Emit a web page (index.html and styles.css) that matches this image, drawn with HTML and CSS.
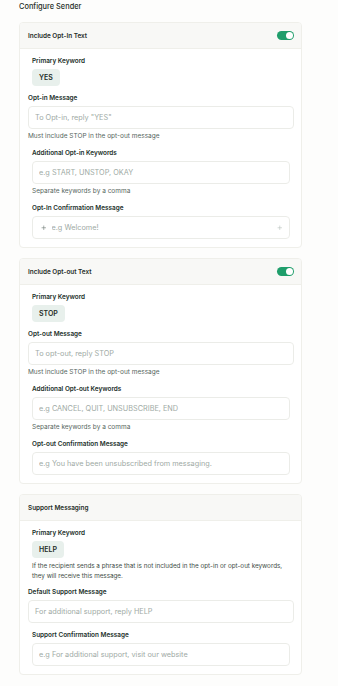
FILE: index.html
```html
<!DOCTYPE html>
<html lang="en">
<head>
    <meta charset="UTF-8">
    <meta name="viewport" content="width=device-width, initial-scale=1.0">
    <title>Configure Sender</title>
    <link rel="stylesheet" href="styles.css">
</head>
<body>
    <div class="page">
        <h1>Configure Sender</h1>

        <div class="card">
            <div class="card-head">
                <span>Include Opt-In Text</span>
                <span class="toggle"><span class="knob"></span></span>
            </div>
            <div class="card-body">
                <div class="group">
                    <div class="label">Primary Keyword</div>
                    <div class="chip">YES</div>
                </div>
                <div class="field">
                    <div class="label">Opt-in Message</div>
                    <input class="input" placeholder="To Opt-in, reply &quot;YES&quot;">
                    <div class="hint">Must include STOP in the opt-out message</div>
                </div>
                <div class="field group">
                    <div class="label">Additional Opt-in Keywords</div>
                    <input class="input" placeholder="e.g START, UNSTOP, OKAY">
                    <div class="hint">Separate keywords by a comma</div>
                </div>
                <div class="field group">
                    <div class="label">Opt-In Confirmation Message</div>
                    <div class="input input-icons">
                        <svg class="plus dark" viewBox="0 0 10 10"><path d="M5 1v8M1 5h8"/></svg>
                        <input placeholder="e.g Welcome!">
                        <svg class="plus" viewBox="0 0 10 10"><path d="M5 1v8M1 5h8"/></svg>
                    </div>
                </div>
            </div>
        </div>

        <div class="card">
            <div class="card-head">
                <span>Include Opt-out Text</span>
                <span class="toggle"><span class="knob"></span></span>
            </div>
            <div class="card-body">
                <div class="group">
                    <div class="label">Primary Keyword</div>
                    <div class="chip">STOP</div>
                </div>
                <div class="field">
                    <div class="label">Opt-out Message</div>
                    <input class="input" placeholder="To opt-out, reply STOP">
                    <div class="hint">Must include STOP in the opt-out message</div>
                </div>
                <div class="field group">
                    <div class="label">Additional Opt-out Keywords</div>
                    <input class="input" placeholder="e.g CANCEL, QUIT, UNSUBSCRIBE, END">
                    <div class="hint">Separate keywords by a comma</div>
                </div>
                <div class="field group">
                    <div class="label">Opt-out Confirmation Message</div>
                    <input class="input" placeholder="e.g You have been unsubscribed from messaging.">
                </div>
            </div>
        </div>

        <div class="card">
            <div class="card-head">
                <span>Support Messaging</span>
            </div>
            <div class="card-body">
                <div class="group">
                    <div class="label">Primary Keyword</div>
                    <div class="chip">HELP</div>
                    <p class="note">If the recipient sends a phrase that is not included in the opt-in or opt-out keywords, they will receive this message.</p>
                </div>
                <div class="field after-note">
                    <div class="label">Default Support Message</div>
                    <input class="input" placeholder="For additional support, reply HELP">
                </div>
                <div class="field group">
                    <div class="label">Support Confirmation Message</div>
                    <input class="input" placeholder="e.g For additional support, visit our website">
                </div>
            </div>
        </div>
    </div>
</body>
</html>
```

FILE: styles.css
```css
body {
    margin: 0;
    background: #fdfdfc;
    color: #1f2d27;
    font-family: Inter, 'Noto Sans', sans-serif;
}
.page {
    padding: 2px 36px 8px 19px;
}
h1 {
    font-size: 7.4px;
    font-weight: 500;
    line-height: 10px;
    margin: 0 0 10px;
}
.card {
    background: #fff;
    border: 1px solid #efefea;
    border-radius: 4px;
    margin-bottom: 10px;
    overflow: hidden;
}
.card-head {
    display: flex;
    justify-content: space-between;
    align-items: center;
    height: 25px;
    padding: 0 7px 0 8px;
    background: #f8f8f6;
    border-bottom: 1px solid #efefea;
    font-size: 6.4px;
    font-weight: 600;
}
.toggle {
    width: 17px;
    height: 9px;
    border-radius: 5px;
    background: #1f9e6b;
    display: flex;
    align-items: center;
    justify-content: flex-end;
    padding: 0 1px;
    box-sizing: border-box;
}
.knob {
    width: 7px;
    height: 7px;
    border-radius: 50%;
    background: #fff;
}
.card-body {
    padding: 8px 7px 8px 8px;
}
.group {
    padding: 0 4px;
}
.field {
    margin-top: 8px;
}
.field.after-note {
    margin-top: 7px;
}
.label {
    font-size: 6.4px;
    font-weight: 600;
    line-height: 9px;
    margin-bottom: 3px;
    color: #22302a;
}
.chip {
    display: flex;
    align-items: center;
    width: max-content;
    height: 17px;
    margin-top: 1px;
    padding: 0 7px;
    border-radius: 4px;
    background: #e8f0ec;
    font-size: 7px;
    font-weight: 600;
}
.input {
    display: block;
    width: 100%;
    height: 23px;
    box-sizing: border-box;
    border: 1px solid #ebece8;
    border-radius: 4px;
    background: #fff;
    padding: 0 6px;
    font-family: inherit;
    font-size: 7.3px;
    color: #1f2d27;
    outline: none;
}
.input::placeholder,
.input-icons input::placeholder {
    color: #a0aaa5;
}
.input-icons {
    display: flex;
    align-items: center;
    gap: 5px;
    padding: 0 7px 0 8px;
}
.input-icons input {
    flex: 1;
    min-width: 0;
    border: none;
    outline: none;
    padding: 0;
    font-family: inherit;
    font-size: 7.3px;
    background: none;
}
.plus {
    width: 5.5px;
    height: 5.5px;
    fill: none;
    stroke: #b7bfbb;
    stroke-width: 1.1;
}
.plus.dark {
    stroke: #6b7772;
}
.hint {
    margin-top: 3px;
    font-size: 6.5px;
    line-height: 9px;
    color: #56665e;
}
.note {
    margin: 3px 0 0;
    font-size: 6.3px;
    line-height: 10px;
    color: #3e4c45;
}
```
